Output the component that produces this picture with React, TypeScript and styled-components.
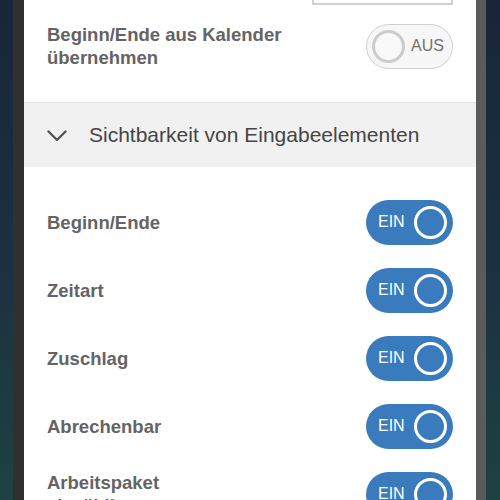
import styled, { createGlobalStyle } from "styled-components";

type Setting = {
  label: string;
  on: boolean;
};

const visibility: Setting[] = [
  { label: "Beginn/Ende", on: true },
  { label: "Zeitart", on: true },
  { label: "Zuschlag", on: true },
  { label: "Abrechenbar", on: true },
  { label: "Arbeitspaket abwählbar", on: true },
];

const GlobalStyle = createGlobalStyle`
  html, body {
    margin: 0;
    padding: 0;
    width: 500px;
    height: 500px;
    overflow: hidden;
    font-family: "Liberation Sans", Arial, sans-serif;
  }
`;

const Toggle = ({ on }: { on: boolean }) => (
  <StyledToggle on={on}>
    {on ? (
      <>
        <span className="state">EIN</span>
        <span className="knob" />
      </>
    ) : (
      <>
        <span className="knob" />
        <span className="state">AUS</span>
      </>
    )}
  </StyledToggle>
);

const Chevron = () => (
  <svg width="20" height="12" viewBox="0 0 20 12" fill="none">
    <path
      d="M1.5 1.5 L10 10 L18.5 1.5"
      stroke="#555"
      strokeWidth="2.4"
      strokeLinecap="round"
      strokeLinejoin="round"
    />
  </svg>
);

const App = () => {
  return (
    <>
      <GlobalStyle />
      <Backdrop>
        <Frame>
          <Panel>
            <InputBox />
            <CalendarRow>
              <Label>
                Beginn/Ende aus Kalender
                <br />
                übernehmen
              </Label>
              <Toggle on={false} />
            </CalendarRow>
            <SectionHeader>
              <Chevron />
              <span>Sichtbarkeit von Eingabeelementen</span>
            </SectionHeader>
            <SettingList>
              {visibility.map((s) => (
                <SettingRow key={s.label}>
                  <Label>{s.label}</Label>
                  <Toggle on={s.on} />
                </SettingRow>
              ))}
            </SettingList>
          </Panel>
        </Frame>
      </Backdrop>
    </>
  );
};

export default App;

const Backdrop = styled.div`
  width: 500px;
  height: 500px;
  padding-left: 13px;
  box-sizing: border-box;
  background: linear-gradient(180deg, #19253a 0%, #1b3040 50%, #1e4242 100%);
  overflow: hidden;
`;

const Frame = styled.div`
  width: 473px;
  height: 500px;
  border-left: 11px solid #303030;
  border-right: 10px solid #5b5b5b;
  box-sizing: border-box;
`;

const Panel = styled.div`
  width: 452px;
  height: 500px;
  background: #ffffff;
  display: flex;
  flex-direction: column;
  overflow: hidden;
`;

const InputBox = styled.div`
  align-self: flex-end;
  width: 141px;
  height: 40px;
  margin: -35px 23px 0 0;
  border: 2px solid #d2d2d2;
  box-sizing: border-box;
  background: #fff;
  flex-shrink: 0;
`;

const Label = styled.div`
  font-size: 18.5px;
  line-height: 23px;
  font-weight: 700;
  color: #646464;
`;

const CalendarRow = styled.div`
  display: flex;
  align-items: center;
  justify-content: space-between;
  padding: 18px 23px 33px;
  border-bottom: 1px solid #e2e2e2;
  flex-shrink: 0;
`;

const SectionHeader = styled.div`
  display: flex;
  align-items: center;
  gap: 22px;
  height: 64px;
  padding: 0 23px;
  background: #f1f1f1;
  font-size: 21px;
  color: #454545;
  flex-shrink: 0;

  svg {
    margin-top: 2px;
  }
`;

const SettingList = styled.div`
  display: flex;
  flex-direction: column;
  padding-top: 21px;
`;

const SettingRow = styled.div`
  display: flex;
  align-items: center;
  justify-content: space-between;
  height: 68px;
  padding: 0 23px;
  flex-shrink: 0;

  ${Label} {
    max-width: 200px;
  }
`;

const StyledToggle = styled.div<{ on: boolean }>`
  width: 87px;
  height: 45px;
  border-radius: 23px;
  box-sizing: border-box;
  display: flex;
  align-items: center;
  justify-content: space-between;
  flex-shrink: 0;
  background: ${({ on }) => (on ? "#3a7bbe" : "#f7f7f7")};
  border: ${({ on }) => (on ? "none" : "1.5px solid #cfcfcf")};
  padding: ${({ on }) => (on ? "0 6px 0 12px" : "0 8px 0 5px")};

  .state {
    font-size: 16px;
    color: ${({ on }) => (on ? "#ffffff" : "#727272")};
  }

  .knob {
    width: 33px;
    height: 33px;
    border-radius: 50%;
    box-sizing: border-box;
    border: 3px solid ${({ on }) => (on ? "#ffffff" : "#cccccc")};
    background: ${({ on }) => (on ? "transparent" : "#f9f9f9")};
  }
`;
